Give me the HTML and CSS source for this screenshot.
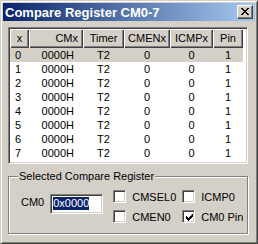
FILE: index.html
```html
<!DOCTYPE html>
<html lang="en">

<head>
    <meta charset="UTF-8">
    <title>Compare Register CM0-7</title>
    <link rel="stylesheet" href="styles.css">
</head>

<body>

    <div class="window">
        <div class="titlebar">
            <span class="title">Compare Register CM0-7</span>
            <button class="close" type="button">
                <svg width="8" height="7" viewBox="0 0 8 7">
                    <path d="M0 0h2v1h1v1h2v-1h1v-1h2v1h-1v1h-1v1h-1v1h1v1h1v1h1v1h-2v-1h-1v-1h-2v1h-1v1h-2v-1h1v-1h1v-1h1v-1h-1v-1h-1v-1h-1z" fill="#000"/>
                </svg>
            </button>
        </div>

        <div class="content">
            <div class="listview">
                <div class="lv-head">
                    <div class="hd">x</div>
                    <div class="hd hd-cmx">CMx</div>
                    <div class="hd">Timer</div>
                    <div class="hd">CMENx</div>
                    <div class="hd">ICMPx</div>
                    <div class="hd">Pin</div>
                </div>
                <div class="lv-row sel"><span class="c-x">0</span><span class="c-cmx">0000H</span><span>T2</span><span>0</span><span>0</span><span>1</span></div>
                <div class="lv-row"><span class="c-x">1</span><span class="c-cmx">0000H</span><span>T2</span><span>0</span><span>0</span><span>1</span></div>
                <div class="lv-row"><span class="c-x">2</span><span class="c-cmx">0000H</span><span>T2</span><span>0</span><span>0</span><span>1</span></div>
                <div class="lv-row"><span class="c-x">3</span><span class="c-cmx">0000H</span><span>T2</span><span>0</span><span>0</span><span>1</span></div>
                <div class="lv-row"><span class="c-x">4</span><span class="c-cmx">0000H</span><span>T2</span><span>0</span><span>0</span><span>1</span></div>
                <div class="lv-row"><span class="c-x">5</span><span class="c-cmx">0000H</span><span>T2</span><span>0</span><span>0</span><span>1</span></div>
                <div class="lv-row"><span class="c-x">6</span><span class="c-cmx">0000H</span><span>T2</span><span>0</span><span>0</span><span>1</span></div>
                <div class="lv-row"><span class="c-x">7</span><span class="c-cmx">0000H</span><span>T2</span><span>0</span><span>0</span><span>1</span></div>
            </div>

            <fieldset class="group">
                <legend>Selected Compare Register</legend>
                <div class="group-body">
                    <span class="lbl">CM0</span>
                    <div class="edit"><span class="edit-sel">0x0000</span></div>
                    <div class="checks">
                        <label class="chk"><span class="box"></span>CMSEL0</label>
                        <label class="chk"><span class="box"></span>ICMP0</label>
                        <label class="chk"><span class="box"></span>CMEN0</label>
                        <label class="chk"><span class="box">
                            <svg width="7" height="7" viewBox="0 0 7 7">
                                <path d="M6 0h1v3h-1v1h-1v1h-1v1h-1v1h-1v-1h-1v-1h-1v-3h1v1h1v1h1v-1h1v-1h1z" fill="#000"/>
                            </svg>
                        </span>CM0 Pin</label>
                    </div>
                </div>
            </fieldset>
        </div>
    </div>

</body>

</html>
```

FILE: styles.css
```css
body {
    margin: 0;
    padding: 0;
    font-family: "Liberation Sans", Arial, sans-serif;
    font-size: 11px;
    color: #000;
    background-color: #d4d0c8;
}

.window {
    width: 258px;
    height: 244px;
    box-sizing: border-box;
    background-color: #d4d0c8;
    border: 1px solid;
    border-color: #d4d0c8 #404040 #404040 #d4d0c8;
    box-shadow: inset 1px 1px 0 #fff, inset -1px -1px 0 #808080;
    padding: 2px;
}

.titlebar {
    height: 18px;
    display: flex;
    align-items: center;
    justify-content: space-between;
    padding: 0 2px;
    background: linear-gradient(to right, #0a246a, #a6caf0);
}

.title {
    color: #fff;
    font-weight: bold;
    font-size: 13px;
}

.close {
    width: 16px;
    height: 14px;
    padding: 0;
    margin: 0;
    border: 1px solid;
    border-color: #fff #404040 #404040 #fff;
    box-shadow: inset -1px -1px 0 #808080;
    background-color: #d4d0c8;
    display: flex;
    align-items: center;
    justify-content: center;
}

.close svg {
    display: block;
    margin: 0 1px 1px 0;
}

.content {
    padding: 6px 0 0 5px;
}

/* list view */
.listview {
    width: 240px;
    height: 137px;
    box-sizing: border-box;
    background-color: #fff;
    border: 1px solid;
    border-color: #808080 #fff #fff #808080;
    box-shadow: inset 1px 1px 0 #404040, inset -1px -1px 0 #d4d0c8;
    padding: 1px;
}

.lv-head,
.lv-row {
    display: grid;
    grid-template-columns: 19px 54px 41px 46px 43px 30px;
    width: 233px;
}

.hd {
    height: 19px;
    line-height: 18px;
    box-sizing: border-box;
    text-align: center;
    background-color: #d4d0c8;
    box-shadow: inset 1px 1px 0 #fff, inset -1px -1px 0 #404040, inset -2px -2px 0 #808080;
}

.hd-cmx {
    text-align: right;
    padding-right: 5px;
}

.lv-row {
    height: 14px;
    line-height: 14px;
}

.lv-row span {
    text-align: center;
}

.lv-row .c-x {
    text-align: left;
    padding-left: 5px;
}

.lv-row .c-cmx {
    text-align: right;
    padding-right: 9px;
}

.lv-row.sel {
    background-color: #d4d0c8;
}

/* group box */
.group {
    width: 240px;
    height: 64px;
    box-sizing: border-box;
    margin: 6px 0 0 0;
    padding: 0;
    min-width: 0;
    border: 1px solid #808080;
    box-shadow: inset 1px 1px 0 #fff, 1px 1px 0 #fff;
}

.group legend {
    margin-left: 9px;
    padding: 0 1px;
    line-height: 13px;
    background-color: #d4d0c8;
}

.group-body {
    display: flex;
    align-items: flex-start;
    padding: 7px 0 0 12px;
}

.lbl {
    margin-top: 6px;
}

.edit {
    width: 53px;
    height: 20px;
    box-sizing: border-box;
    margin: 4px 0 0 6px;
    padding: 2px 0 0 2px;
    background-color: #fff;
    border: 1px solid;
    border-color: #808080 #fff #fff #808080;
    box-shadow: inset 1px 1px 0 #404040, inset -1px -1px 0 #d4d0c8;
}

.edit-sel {
    display: inline-block;
    height: 13px;
    line-height: 13px;
    color: #fff;
    background-color: #0a246a;
}

.checks {
    display: grid;
    grid-template-columns: 69px auto;
    row-gap: 7px;
    margin-left: 10px;
}

.chk {
    display: flex;
    align-items: center;
    gap: 6px;
    height: 13px;
}

.box {
    width: 13px;
    height: 13px;
    box-sizing: border-box;
    display: flex;
    align-items: center;
    justify-content: center;
    background-color: #fff;
    border: 1px solid;
    border-color: #808080 #fff #fff #808080;
    box-shadow: inset 1px 1px 0 #404040, inset -1px -1px 0 #d4d0c8;
}

.box svg {
    display: block;
    margin: 1px 0 0 1px;
}
```
